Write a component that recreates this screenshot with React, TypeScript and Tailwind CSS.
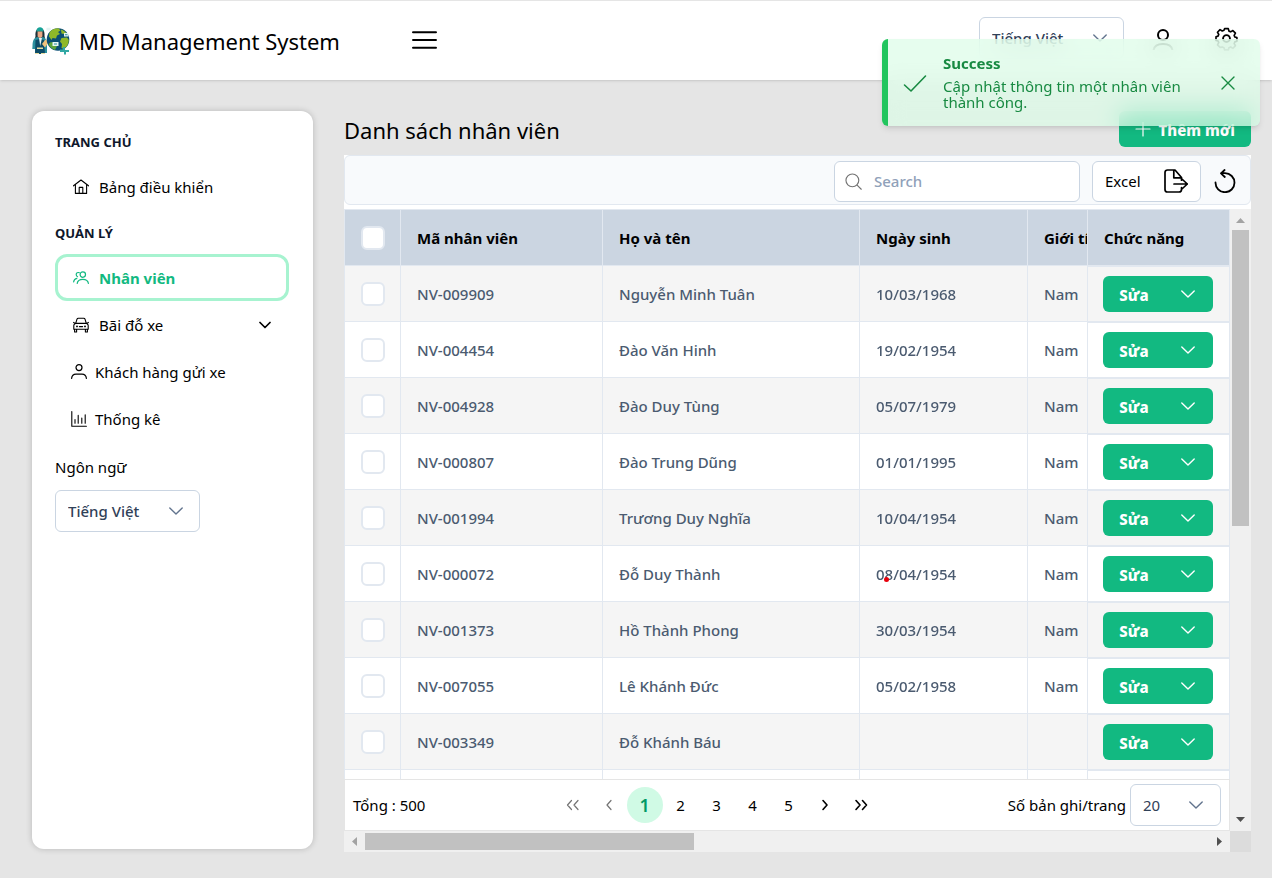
import type { ReactNode } from "react";

type IconProps = { className?: string };

function Icon({ className = "", box = 24, width = 1.5, children }: IconProps & { box?: number; width?: number; children: ReactNode }) {
  return (
    <svg
      viewBox={`0 0 ${box} ${box}`}
      className={`shrink-0 ${className}`}
      fill="none"
      stroke="currentColor"
      strokeWidth={width}
      strokeLinecap="round"
      strokeLinejoin="round"
      aria-hidden="true"
    >
      {children}
    </svg>
  );
}

const HomeIcon = ({ className }: IconProps) => (
  <Icon box={16} width={1.1} className={className}>
    <path d="M.5 6.800 8 1l7.500 5.800M2.400 5.600v8.800h11.200V5.600M6.200 14.200V8.400h3.600v5.800" />
  </Icon>
);

const PeopleIcon = ({ className }: IconProps) => (
  <Icon box={16} width={1.2} className={className}>
    <circle cx="9.8" cy="4.6" r="2.7" />
    <path d="M4.200 13.400c.4-2.500 2.600-4 5.600-4s5.200 1.500 5.600 4M6.200 2.600C4.600 2.200 3.200 3 3.200 4.600c0 1 .5 1.700 1.300 2.100M.6 12c.2-1.900 1.400-3.300 3.300-3.700" />
  </Icon>
);

const CarIcon = ({ className }: IconProps) => (
  <Icon box={16} width={1.1} className={className}>
    <path d="M2.700 6.400 4 2.200c.2-.7.6-1 1.300-1h5.400c.7 0 1.100.3 1.300 1l1.300 4.200M.6 5.400l1.800 1h11.200l1.800-1M2.400 6.400C1.400 6.900.8 7.600.8 8.400v3.800h14.400V8.400c0-.8-.6-1.500-1.600-2M1.600 12.200v2.800h2v-2.800M12.400 12.200v2.800h2v-2.800M6.400 9.600h3.200" />
    <circle cx="4" cy="9.4" r=".4" fill="currentColor" />
    <circle cx="12" cy="9.4" r=".4" fill="currentColor" />
  </Icon>
);

const PersonIcon = ({ className }: IconProps) => (
  <Icon box={16} width={1.2} className={className}>
    <circle cx="8" cy="3.6" r="3" />
    <path d="M.6 14.400c.3-2.700 2-4.200 4.400-4.200h6c2.400 0 4.100 1.500 4.400 4.200" />
  </Icon>
);

const ChartIcon = ({ className }: IconProps) => (
  <Icon box={16} width={1.1} className={className}>
    <path d="M.8.6v14.600h14.600M4 12.200V8.600M7.200 12.200V4.400M10.800 12.200V7M14.200 12.200V3.800" />
  </Icon>
);

const ChevronIcon = ({ className }: IconProps) => (
  <Icon box={14} width={1.4} className={className}>
    <path d="m.8 4 6.200 6 6.200-6" />
  </Icon>
);

const MenuIcon = ({ className }: IconProps) => (
  <Icon width={2} className={className}>
    <path d="M1 4h22M1 11.500h22M1 19h22" />
  </Icon>
);

const GearIcon = ({ className }: IconProps) => (
  <Icon width={1.8} className={className}>
    <circle cx="12" cy="12" r="3.3" />
    <path
      d="M10 2.200h4l.7 2.700 1.900.8 2.400-1.400 2.800 2.800-1.400 2.400.8 1.900 2.200.6v4l-2.200.6-.8 1.900 1.400 2.400-2.800 2.800-2.400-1.400-1.900.8-.7 2.300h-4l-.7-2.300-1.900-.8L5 22.700l-2.800-2.800 1.400-2.400-.8-1.900L.6 15v-4l2.200-.6.8-1.900-1.400-2.400L5 3.300l2.400 1.400 1.900-.8z"
      transform="translate(1.400 .6) scale(.88)"
    />
  </Icon>
);

const ExportIcon = ({ className }: IconProps) => (
  <Icon width={1.7} className={className}>
    <path d="M17.500 8.500 11 1H3.500C2 1 1 2 1 3.500v17C1 22 2 23 3.500 23h11.500c1.500 0 2.500-1 2.500-2.500v-1.800M17.500 8.500v2.700M9.800 1.200v7.600h7.700M10 15h13.400M18.500 10.500l4.800 4.500-4.800 4.500" />
  </Icon>
);

const ReloadIcon = ({ className }: IconProps) => (
  <Icon width={1.8} className={className}>
    <path d="M2.500 13.500a9.500 9.500 0 1 0 9.500-9.300H8M11.600 1 8 4.400l3.800 3.600" />
  </Icon>
);

const SearchIcon = ({ className }: IconProps) => (
  <Icon box={18} width={1.2} className={className}>
    <circle cx="7.8" cy="7.8" r="6.800" />
    <path d="m12.800 12.800 4.400 4.400" />
  </Icon>
);

function Logo() {
  return (
    <svg viewBox="0 0 38 28" className="h-7 w-[38px] shrink-0" aria-hidden="true">
      <path d="M3.500 9C3 4 5 1 8 1s5 3 4.500 8l1 5H2.500z" fill="#1d3038" />
      <path d="M4.400 4.600C4.500 1.500 6 .3 8 .3s3.400 1.200 3.600 4.300z" fill="#17a398" />
      <path d="M5.600 4.500h4.800v4.300c0 1.500-1 2.200-2.400 2.200s-2.400-.7-2.400-2.200z" fill="#e8a784" />
      <path d="M.5 19C.6 13 2 10.500 6 10l2 2 2-2c4 .5 5 3 5 9v7H3v-4H.3z" fill="#2b8f9d" />
      <path d="M3.500 13 8 12l4 1 1 14H3z" fill="#0d4c68" />
      <path d="m7 11 1.200 8L10 11z" fill="#e9f4f4" />
      <path d="m10 17 3.500-4.500 3.500 2-4 6z" fill="#f1c27c" />
      <path d="M5 20.500h6v1.500H5zM3 26h4v1H3zM9 26h4v1H9z" fill="#e8dca0" />
      <circle cx="26" cy="12.500" r="11.300" fill="#0a4f75" />
      <path d="M17.500 5.500c2-3 5-4.300 9-4.300l2 2.300-2.500 1.500 2 2-3 1.500-1 3-3.500-.5-1 2-2.500-3.500z" fill="#8fb929" />
      <path d="M29 2.500c3 1 5.500 3 6.800 6l-2.800 1-1-2.500-2.500-.5zM29.500 11l5.500-.5 1.800 2.500c0 4-2 7-5 9l-2.300-1 .5-4-2-2.500z" fill="#8fb929" />
      <path d="m19 15 3 1 3 3-2 4c-3-1-5.500-3-6.500-6z" fill="#5da33c" />
      <path d="M14.500.8h4.200v2.800h-4.200zM32 6h4.500v3.500H32zM20.500 15h6v4h-6z" fill="#e4f3f2" />
      <path d="M22 16.500h3v1h-3zM33 7.300h2.500v1H33z" fill="#2b8f9d" />
      <path d="M28 22.500h3V20h2v3h4v2h-3v2.500h-2V25h-4z" fill="#31a8a4" />
    </svg>
  );
}

function LanguageSelect({ id, label }: { id: string; label?: string }) {
  return (
    <div className="grid w-[145px] items-center">
      <select
        id={id}
        aria-label={label}
        className="col-start-1 row-start-1 h-[42px] w-full appearance-none rounded-md border border-slate-300 bg-white px-3 text-[15px] font-medium text-slate-700"
      >
        <option>Tiếng Việt</option>
        <option>English</option>
      </select>
      <ChevronIcon className="pointer-events-none col-start-1 row-start-1 mr-[17px] size-[14px] justify-self-end text-slate-500" />
    </div>
  );
}

function NavLink({ icon, tight, active, children, trailing }: { icon: ReactNode; tight?: boolean; active?: boolean; children: ReactNode; trailing?: ReactNode }) {
  const spacing = tight ? "gap-2 px-[13px]" : "gap-[10px] px-[15px]";
  const look = active ? "border-[#a7f3d0] font-bold text-[#12b981]" : "border-transparent text-black";
  return (
    <a href="#" className={`flex h-[47px] items-center rounded-xl border-[3px] ${spacing} ${look}`}>
      {icon}
      <span className="flex-1">{children}</span>
      {trailing}
    </a>
  );
}

const employees = [
  { code: "NV-009909", name: "Nguyễn Minh Tuân", birth: "10/03/1968", gender: "Nam" },
  { code: "NV-004454", name: "Đào Văn Hinh", birth: "19/02/1954", gender: "Nam" },
  { code: "NV-004928", name: "Đào Duy Tùng", birth: "05/07/1979", gender: "Nam" },
  { code: "NV-000807", name: "Đào Trung Dũng", birth: "01/01/1995", gender: "Nam" },
  { code: "NV-001994", name: "Trương Duy Nghĩa", birth: "10/04/1954", gender: "Nam" },
  { code: "NV-000072", name: "Đỗ Duy Thành", birth: "08/04/1954", gender: "Nam", marked: true },
  { code: "NV-001373", name: "Hồ Thành Phong", birth: "30/03/1954", gender: "Nam" },
  { code: "NV-007055", name: "Lê Khánh Đức", birth: "05/02/1958", gender: "Nam" },
  { code: "NV-003349", name: "Đỗ Khánh Báu", birth: "", gender: "" },
  { code: "", name: "", birth: "", gender: "" },
];

const checkbox = "block size-6 appearance-none rounded-md border-2 border-slate-200 bg-white checked:bg-emerald-500";
const th = "border-y border-r border-slate-200 bg-[#cbd5e1] px-4 text-left font-bold whitespace-nowrap text-black";
const td = "border-r border-b border-slate-200 whitespace-nowrap";

function EmployeeTable() {
  return (
    <table className="w-[977px] min-w-full table-fixed border-separate border-spacing-0 border-l border-slate-200 text-[15px] font-medium text-[#4b5b70]">
      <colgroup>
        <col className="w-14" />
        <col className="w-[202px]" />
        <col className="w-[257px]" />
        <col className="w-[168px]" />
        <col />
        <col className="w-[143px]" />
      </colgroup>
      <thead>
        <tr className="h-[57px]">
          <th className={th}>
            <input type="checkbox" aria-label="Chọn tất cả" className={checkbox} />
          </th>
          <th className={th}>Mã nhân viên</th>
          <th className={th}>Họ và tên</th>
          <th className={th}>Ngày sinh</th>
          <th className={th}>Giới tính</th>
          <th className={`sticky right-0 border-l ${th}`}>Chức năng</th>
        </tr>
      </thead>
      <tbody>
        {employees.map((e, i) => {
          const bg = i % 2 === 0 ? "bg-neutral-100" : "bg-white";
          return (
            <tr key={i} className={`h-14 ${bg}`}>
              <td className={`px-4 ${td}`}>
                {e.code && <input type="checkbox" aria-label={`Chọn ${e.code}`} className={checkbox} />}
              </td>
              <td className={`px-4 ${td}`}>{e.code}</td>
              <td className={`px-4 ${td}`}>{e.name}</td>
              <td className={`px-4 ${td}`}>
                <span className="relative">
                  {e.birth}
                  {e.marked && <span className="absolute bottom-[2px] left-2 size-[5px] rounded-full bg-red-600" />}
                </span>
              </td>
              <td className={`px-4 ${td}`}>{e.gender}</td>
              <td className={`sticky right-0 border-t border-l px-[15px] ${td} ${bg}`}>
                {e.code && (
                  <div className="flex h-9 w-[110px] overflow-hidden rounded-md bg-[#12b981] font-extrabold text-white">
                    <button type="button" className="w-[62px] pt-[2px]">Sửa</button>
                    <button type="button" aria-label="Thao tác khác" className="grid flex-1 place-items-center pr-[2px]">
                      <ChevronIcon className="size-[14px]" />
                    </button>
                  </div>
                )}
              </td>
            </tr>
          );
        })}
      </tbody>
    </table>
  );
}

const arrow = "size-[21px] shrink-0";

function PageArrow({ label, muted, double, forward }: { label: string; muted?: boolean; double?: boolean; forward?: boolean }) {
  return (
    <button type="button" aria-label={label} className={`grid size-9 place-items-center ${muted ? "text-neutral-500" : "text-black"}`}>
      <Icon box={14} width={muted ? 1.2 : 1.6} className={forward ? "size-[14px]" : "size-[14px] rotate-180"}>
        {double ? <path d="m2 2.500 4 4.500-4 4.500M8.500 2.500l4 4.500-4 4.500" /> : <path d="m5 2.500 4 4.500-4 4.500" />}
      </Icon>
    </button>
  );
}

function Paginator() {
  return (
    <div className="flex h-[52px] shrink-0 items-center justify-between border border-neutral-200 bg-white px-2">
      <span>Tổng : 500</span>
      <nav aria-label="Phân trang" className="flex items-center">
        <PageArrow label="Trang đầu" muted double />
        <PageArrow label="Trang trước" muted />
        <button type="button" aria-current="page" className="size-9 rounded-full bg-emerald-100 text-lg font-semibold text-emerald-600">1</button>
        {["2", "3", "4", "5"].map((n) => (
          <button key={n} type="button" className="size-9">{n}</button>
        ))}
        <PageArrow label="Trang sau" forward />
        <PageArrow label="Trang cuối" double forward />
      </nav>
      <div className="flex items-center gap-1">
        <label htmlFor="page-size">Số bản ghi/trang</label>
        <div className="grid w-[91px] items-center">
          <select id="page-size" className="col-start-1 row-start-1 h-[42px] w-full appearance-none rounded-md border border-slate-300 bg-white px-3 text-slate-700">
            <option>20</option>
            <option>50</option>
          </select>
          <ChevronIcon className="pointer-events-none col-start-1 row-start-1 mr-[18px] size-[14px] justify-self-end text-slate-500" />
        </div>
      </div>
    </div>
  );
}

export default function App() {
  return (
    <div className="flex h-screen min-h-[640px] flex-col bg-[#e5e5e5] font-['Noto_Sans',sans-serif] text-[15px] leading-5 text-black">
      <header className="flex h-20 shrink-0 items-center border-t border-neutral-200 bg-white pr-[33px] pl-8 shadow-sm">
        <Logo />
        <span className="ml-[9px] text-[22px]">MD Management System</span>
        <button type="button" aria-label="Menu" className="ml-[72px]">
          <MenuIcon className="size-[25px]" />
        </button>
        <div className="ml-auto flex items-center gap-[27px] pb-[5px]">
          <LanguageSelect id="header-language" label="Ngôn ngữ" />
          <button type="button" aria-label="Tài khoản">
            <Icon width={2} className="size-6">
              <circle cx="12" cy="9" r="5" />
              <path d="M2.500 24.500c.6-4.500 3.500-6.500 9.500-6.500s8.900 2 9.500 6.500" />
            </Icon>
          </button>
          <button type="button" aria-label="Cài đặt" className="ml-3">
            <GearIcon className="size-[25px]" />
          </button>
        </div>
      </header>

      <div className="flex min-h-0 flex-1 gap-[31px] pt-[31px] pr-[21px] pb-[26px] pl-8">
        <aside className="mb-[3px] w-[281px] shrink-0 rounded-xl bg-white pt-5 pr-6 pl-[23px] shadow-[0_0_6px_rgba(0,0,0,0.2)]">
          <h2 className="text-[13px] leading-[22px] font-bold text-slate-900">TRANG CHỦ</h2>
          <div className="mt-[10px]">
            <NavLink icon={<HomeIcon className="size-4" />}>Bảng điều khiển</NavLink>
          </div>
          <h2 className="mt-3 text-[13px] leading-[22px] font-bold text-slate-900">QUẢN LÝ</h2>
          <nav className="mt-[10px]">
            <NavLink active icon={<PeopleIcon className="size-4" />}>Nhân viên</NavLink>
            <NavLink
              icon={<CarIcon className="size-4" />}
              trailing={
                <Icon box={12} width={1.7} className="size-3">
                  <path d="m1 3.500 5 5 5-5" />
                </Icon>
              }
            >
              Bãi đỗ xe
            </NavLink>
            <NavLink tight icon={<PersonIcon className="size-4" />}>Khách hàng gửi xe</NavLink>
            <NavLink tight icon={<ChartIcon className="size-4" />}>Thống kê</NavLink>
          </nav>
          <label htmlFor="side-language" className="mt-[15px] mb-[13px] block">Ngôn ngữ</label>
          <LanguageSelect id="side-language" />
        </aside>

        <main className="flex min-w-0 flex-1 flex-col">
          <div className="mb-2 flex h-9 shrink-0 items-center justify-between">
            <h1 className="pt-[2px] text-[22px]">Danh sách nhân viên</h1>
            <button type="button" className="flex h-9 items-center gap-2 rounded-md bg-[#12b981] px-4 pt-[2px] font-extrabold text-white">
              <Icon box={16} width={1.2} className="size-4">
                <path d="M8 0v14M1 7h14" />
              </Icon>
              Thêm mới
            </button>
          </div>

          <section className="flex min-h-0 flex-1 flex-col bg-white">
            <div className="mb-1 flex h-[50px] shrink-0 items-center justify-end gap-3 rounded-md border border-slate-200 bg-slate-50 pt-[2px] pr-[13px]">
              <div className="flex h-[41px] w-[246px] items-center gap-3 rounded-md border border-slate-300 bg-white px-[10px]">
                <SearchIcon className="size-[17px] text-neutral-500" />
                <input type="search" aria-label="Search" placeholder="Search" className="min-w-0 flex-1 bg-transparent font-medium outline-none placeholder:text-slate-400" />
              </div>
              <button type="button" className="flex h-[41px] w-[109px] items-center justify-between rounded-md border border-slate-300 bg-white px-3">
                Excel
                <ExportIcon className="size-6" />
              </button>
              <button type="button" aria-label="Tải lại">
                <ReloadIcon className="size-6" />
              </button>
            </div>

            <div className="grid min-h-0 flex-1 grid-cols-[minmax(0,1fr)_21px] grid-rows-[minmax(0,1fr)_21px] bg-[#f0f0f0]">
              <div className="flex min-h-0 flex-col">
                <div className="min-h-0 flex-1 overflow-hidden bg-white">
                  <EmployeeTable />
                </div>
                <Paginator />
              </div>
              <div className="flex flex-col" aria-hidden="true">
                <svg viewBox="0 0 21 21" className={arrow}><path d="M6 14h9l-4.500-5z" fill="#a3a3a3" /></svg>
                <div className="min-h-0 flex-1 px-[2px]"><div className="h-[51%] bg-[#c1c1c1]" /></div>
                <svg viewBox="0 0 21 21" className={arrow}><path d="M6 7h9l-4.500 5z" fill="#505050" /></svg>
              </div>
              <div className="flex" aria-hidden="true">
                <svg viewBox="0 0 21 21" className={arrow}><path d="M13 6v9l-5-4.500z" fill="#a3a3a3" /></svg>
                <div className="min-w-0 flex-1 py-[2px]"><div className="h-full w-[39%] bg-[#c1c1c1]" /></div>
                <svg viewBox="0 0 21 21" className={arrow}><path d="M8 6v9l5-4.500z" fill="#505050" /></svg>
              </div>
              <div className="bg-[#dcdcdc]" />
            </div>
          </section>
        </main>
      </div>

      <div role="alert" className="fixed top-[39px] right-3 flex w-[378px] items-center rounded-md border-l-[6px] border-[#22c55e] bg-[#dcfce7]/70 pt-[17px] pr-[25px] pb-4 pl-[15px] text-[#188a42] shadow-md backdrop-blur-[12px]">
        <Icon box={24} width={1.6} className="size-6">
          <path d="m1.500 14 6.500 6L22.500 5" />
        </Icon>
        <div className="mt-[-1px] ml-4 flex-1 leading-4">
          <p className="font-bold">Success</p>
          <p className="mt-[7px]">Cập nhật thông tin một nhân viên thành công.</p>
        </div>
        <button type="button" aria-label="Đóng" className="ml-7">
          <Icon box={14} width={1.4} className="size-[14px]">
            <path d="m1 1 12 12M13 1 1 13" />
          </Icon>
        </button>
      </div>
    </div>
  );
}
